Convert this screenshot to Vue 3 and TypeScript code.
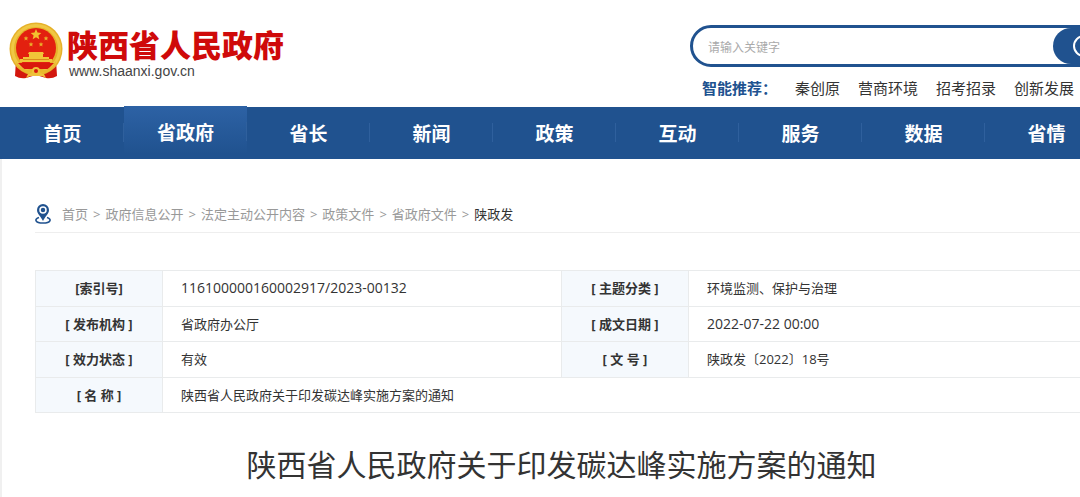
<script setup lang="ts">
import { ref } from 'vue'

interface Field {
  label: string
  value: string
  numeric?: boolean
}

const keyword = ref('')
const hotWords: string[] = ['秦创原', '营商环境', '招考招录', '创新发展']
const navItems: string[] = ['首页', '省政府', '省长', '新闻', '政策', '互动', '服务', '数据', '省情']
const activeNav = ref('省政府')
const crumbs: string[] = ['首页', '政府信息公开', '法定主动公开内容', '政策文件', '省政府文件']
const rows: Field[][] = [
  [
    { label: '[索引号]', value: '116100000160002917/2023-00132', numeric: true },
    { label: '[ 主题分类 ]', value: '环境监测、保护与治理' },
  ],
  [
    { label: '[ 发布机构 ]', value: '省政府办公厅' },
    { label: '[ 成文日期 ]', value: '2022-07-22 00:00', numeric: true },
  ],
  [
    { label: '[ 效力状态 ]', value: '有效' },
    { label: '[ 文 号 ]', value: '陕政发〔2022〕18号' },
  ],
  [{ label: '[ 名 称 ]', value: '陕西省人民政府关于印发碳达峰实施方案的通知' }],
]
</script>

<template>
  <div class="page">
    <header class="header">
      <a class="brand" href="#">
        <svg class="emblem" viewBox="0 0 54 58" aria-hidden="true">
          <path d="M7 38 L6 54 Q11 57 17 56 L27 53 L37 56 Q43 57 48 54 L47 38 Z" fill="#d3170e" />
          <circle cx="27" cy="27" r="26.500" fill="#e6b12a" />
          <circle cx="27" cy="27" r="23.500" fill="none" stroke="#f0c844" stroke-width="3" />
          <circle cx="27" cy="26" r="20" fill="#e3200f" />
          <path d="M27 7l1.500 3.600 3.800.3-2.900 2.500.9 3.800-3.300-2-3.300 2 .9-3.800-2.900-2.500 3.800-.3z" fill="#f2c12f" />
          <g fill="#eab02a">
            <path id="star" d="M17 14l.7 1.500 1.600.1-1.200 1.100.4 1.700-1.500-.9-1.500.9.4-1.700-1.200-1.100 1.600-.1z" />
            <use href="#star" x="20" />
            <use href="#star" x="5" y="6" />
            <use href="#star" x="15" y="6" />
          </g>
          <path d="M20 30h14l1 2h-1v3h6v2h3v3H11v-3h3v-2h6v-3h-1z" fill="#f1c538" />
          <path d="M14 37.500h26" stroke="#dc8a1c" />
          <path d="M9 41h36l-6 6H15z" fill="#d9180d" />
          <path d="M7 39 Q12 48 21 48 L27 46 L33 48 Q42 48 47 39 L46 43 Q41 51 32 51 L27 49 L22 51 Q13 51 8 43 Z" fill="#e9b72c" />
          <path d="M17 56l2-4 5-1 3 2 3-2 5 1 2 4-4-2h-12z" fill="#efc13a" />
          <circle cx="27" cy="49" r="3" fill="#d9180d" stroke="#efc13a" stroke-width="2" />
        </svg>
        <span class="brand-text">
          <span class="brand-name">陕西省人民政府</span>
          <span class="brand-url">www.shaanxi.gov.cn</span>
        </span>
      </a>
      <div class="tools">
        <form class="search" role="search" @submit.prevent>
          <input v-model="keyword" type="text" placeholder="请输入关键字" aria-label="请输入关键字" />
          <button type="submit" aria-label="搜索">
            <svg viewBox="0 0 26 26" aria-hidden="true">
              <circle cx="11" cy="13" r="10" />
              <path d="M18 20l6 6" />
            </svg>
          </button>
        </form>
        <div class="hot">
          <strong>智能推荐：</strong>
          <a v-for="word in hotWords" :key="word" href="#">{{ word }}</a>
        </div>
      </div>
    </header>

    <nav class="nav">
      <a
        v-for="item in navItems"
        :key="item"
        href="#"
        :class="{ active: item === activeNav }"
        @click.prevent="activeNav = item"
      >{{ item }}</a>
    </nav>

    <main class="content">
      <div class="crumbs">
        <svg viewBox="0 0 16 20" aria-hidden="true">
          <path d="M4 13.500C-1 15 0 19 8 19s9-4 4-5.500" fill="none" stroke="#20528f" stroke-width="1.600" />
          <path d="M8 0a6 6 0 0 1 6 6c0 4-4 6.500-6 11C6 12.500 2 10 2 6a6 6 0 0 1 6-6z" fill="#20528f" />
          <circle cx="8" cy="6" r="3" fill="#20528f" stroke="#fff" stroke-width="1.500" />
        </svg>
        <template v-for="crumb in crumbs" :key="crumb">
          <a href="#">{{ crumb }}</a>
          <span>&gt;</span>
        </template>
        <a class="current" href="#" aria-current="page">陕政发</a>
      </div>

      <table class="meta">
        <colgroup>
          <col class="col-label" />
          <col class="col-value" />
          <col class="col-label" />
          <col />
        </colgroup>
        <tbody>
          <tr v-for="(row, index) in rows" :key="index">
            <template v-for="field in row" :key="field.label">
              <th scope="row">{{ field.label }}</th>
              <td :class="{ numeric: field.numeric }" :colspan="row.length === 1 ? 3 : 1">{{ field.value }}</td>
            </template>
          </tr>
        </tbody>
      </table>

      <h1>陕西省人民政府关于印发碳达峰实施方案的通知</h1>
    </main>
  </div>
</template>

<style>
body {
  margin: 0;
  background: #fff;
}
</style>

<style scoped>
.page {
  overflow: hidden;
  color: #333;
  font-family: "Open Sans", "Noto Sans CJK SC", sans-serif;
  font-size: 13px;
}

a {
  color: inherit;
  text-decoration: none;
}

.header {
  display: flex;
  justify-content: space-between;
  height: 107px;
}

.brand {
  display: flex;
  align-items: flex-start;
  gap: 4px;
  padding: 22px 0 0 9px;
}

.emblem {
  width: 54px;
  height: 58px;
}

.brand-text {
  display: flex;
  flex-direction: column;
  padding-top: 5px;
}

.brand-name {
  color: #cf0a0a;
  font-size: 31px;
  font-weight: 900;
  line-height: 36px;
  white-space: nowrap;
}

.brand-url {
  padding-left: 2px;
  color: #444;
  font-family: "Liberation Sans", Arial, sans-serif;
  font-size: 14px;
  line-height: 16px;
}

.tools {
  width: 390px;
  padding-top: 25px;
}

.search {
  display: flex;
  box-sizing: border-box;
  height: 42px;
  margin-right: -40px;
  border: 3px solid #20528f;
  border-radius: 21px;
  overflow: hidden;
}

.search input {
  flex: 1;
  min-width: 0;
  padding: 2px 15px 0;
  border: 0;
  outline: 0;
  background: none;
  color: #333;
  font: inherit;
  font-size: 12px;
}

.search input::placeholder {
  color: #aaa;
  opacity: 1;
}

.search button {
  display: flex;
  align-items: center;
  width: 64px;
  padding: 0 0 0 20px;
  border: 0;
  border-radius: 18px 0 0 18px;
  background: #20528f;
}

.search svg {
  width: 26px;
  height: 26px;
  fill: none;
  stroke: #fff;
  stroke-width: 2;
}

.hot {
  display: flex;
  gap: 18px;
  padding: 10px 0 0 12px;
  font-size: 15px;
  line-height: 22px;
  white-space: nowrap;
}

.hot strong {
  color: #20528f;
}

.nav {
  display: flex;
  height: 52px;
  padding-left: 1px;
  background: #20528f;
}

.nav a {
  position: relative;
  flex: 0 0 123px;
  color: #fff;
  font-size: 19px;
  font-weight: 700;
  line-height: 54px;
  text-align: center;
}

.nav a::after {
  position: absolute;
  top: 16px;
  right: 0;
  width: 1px;
  height: 19px;
  background: #2f609d;
  content: "";
}

.nav .active {
  margin-top: -1px;
  background: linear-gradient(#2d62a5, #20528f 48px);
}

.content {
  padding: 44px 0 11px 33px;
  border-left: 2px solid #f0f0f0;
}

.crumbs {
  display: flex;
  align-items: flex-start;
  gap: 5px;
  height: 28px;
  padding-top: 1px;
  border-bottom: 1px solid #eee;
  color: #999;
  line-height: 20px;
  white-space: nowrap;
}

.crumbs svg {
  width: 16px;
  height: 20px;
  margin-right: 6px;
}

.crumbs .current {
  color: #333;
}

.meta {
  width: 100%;
  height: 143px;
  margin-top: 37px;
  border-collapse: collapse;
  table-layout: fixed;
}

.col-label {
  width: 127px;
}

.col-value {
  width: 38.2%;
}

.meta th,
.meta td {
  padding: 0;
  border: 1px solid #e9ebec;
  border-right: 0;
  line-height: 20px;
}

.meta th {
  background: #f5f9fd;
  text-align: center;
}

.meta td {
  padding-left: 18px;
}

.meta .numeric {
  font-size: 14px;
}

h1 {
  margin: 30px 0 0;
  padding-left: 8px;
  color: #333;
  font-size: 30px;
  font-weight: 400;
  line-height: 44px;
  text-align: center;
}
</style>
